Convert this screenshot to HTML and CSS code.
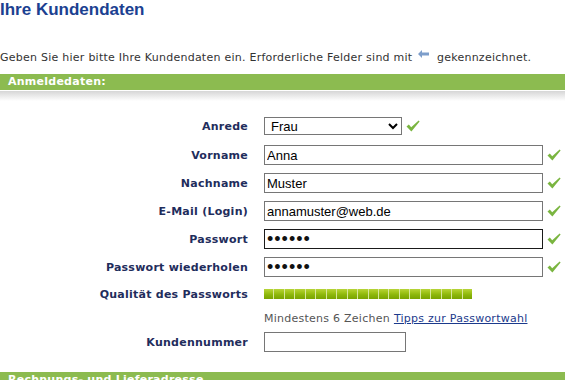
FILE: index.html
```html
<!DOCTYPE html>
<html lang="de">
<head>
<meta charset="utf-8">
<title>Ihre Kundendaten</title>
<link rel="stylesheet" href="styles.css">
</head>
<body>
<h1 class="title">Ihre Kundendaten</h1>
<p class="intro">Geben Sie hier bitte Ihre Kundendaten ein. Erforderliche Felder sind mit <svg class="req" width="11" height="8" viewBox="0 0 11 8"><polygon points="0,4 4,0 4,2.5 11,2.5 11,5.5 4,5.5 4,8" fill="#7d9ecb"/></svg> gekennzeichnet.</p>

<div class="section-bar">Anmeldedaten:</div>
<div class="bar-shadow"></div>

<form class="form">
  <div class="row row-first">
    <label class="label">Anrede</label>
    <div class="field">
      <select class="select"><option>Frau</option><option>Herr</option></select>
      <svg class="check" width="14" height="12" viewBox="0 0 14 12"><path d="M0.5 6.5 L2.8 4.6 L5.2 7.2 L12.6 0.4 L13.6 1.4 L5.4 11.6 Z" fill="#7ab540"/></svg>
    </div>
  </div>
  <div class="row">
    <label class="label">Vorname</label>
    <div class="field">
      <input class="input" type="text" value="Anna">
      <svg class="check" width="14" height="12" viewBox="0 0 14 12"><path d="M0.5 6.5 L2.8 4.6 L5.2 7.2 L12.6 0.4 L13.6 1.4 L5.4 11.6 Z" fill="#7ab540"/></svg>
    </div>
  </div>
  <div class="row">
    <label class="label">Nachname</label>
    <div class="field">
      <input class="input" type="text" value="Muster">
      <svg class="check" width="14" height="12" viewBox="0 0 14 12"><path d="M0.5 6.5 L2.8 4.6 L5.2 7.2 L12.6 0.4 L13.6 1.4 L5.4 11.6 Z" fill="#7ab540"/></svg>
    </div>
  </div>
  <div class="row">
    <label class="label">E-Mail (Login)</label>
    <div class="field">
      <input class="input" type="text" value="annamuster@web.de">
      <svg class="check" width="14" height="12" viewBox="0 0 14 12"><path d="M0.5 6.5 L2.8 4.6 L5.2 7.2 L12.6 0.4 L13.6 1.4 L5.4 11.6 Z" fill="#7ab540"/></svg>
    </div>
  </div>
  <div class="row">
    <label class="label">Passwort</label>
    <div class="field">
      <input class="input input-pw input-focus" type="password" value="geheim">
      <svg class="check" width="14" height="12" viewBox="0 0 14 12"><path d="M0.5 6.5 L2.8 4.6 L5.2 7.2 L12.6 0.4 L13.6 1.4 L5.4 11.6 Z" fill="#7ab540"/></svg>
    </div>
  </div>
  <div class="row">
    <label class="label">Passwort wiederholen</label>
    <div class="field">
      <input class="input input-pw" type="password" value="geheim">
      <svg class="check" width="14" height="12" viewBox="0 0 14 12"><path d="M0.5 6.5 L2.8 4.6 L5.2 7.2 L12.6 0.4 L13.6 1.4 L5.4 11.6 Z" fill="#7ab540"/></svg>
    </div>
  </div>
  <div class="row row-quality">
    <label class="label">Qualität des Passworts</label>
    <div class="field">
      <div class="strength">
        <span></span><span></span><span></span><span></span><span></span>
        <span></span><span></span><span></span><span></span><span></span>
        <span></span><span></span><span></span><span></span><span></span>
        <span></span><span></span><span></span><span></span><span></span>
      </div>
    </div>
  </div>
  <div class="row row-hint">
    <span class="label"></span>
    <div class="field hint">Mindestens 6 Zeichen <a class="link" href="#">Tipps zur Passwortwahl</a></div>
  </div>
  <div class="row row-last">
    <label class="label">Kundennummer</label>
    <div class="field">
      <input class="input input-short" type="text" value="">
    </div>
  </div>
</form>

<div class="section-bar">Rechnungs- und Lieferadresse</div>
</body>
</html>
```

FILE: styles.css
```css
html, body {
  margin: 0;
  padding: 0;
  background: #fff;
}

body {
  width: 565px;
  overflow: hidden;
  font-family: "DejaVu Sans", Verdana, sans-serif;
  font-size: 11px;
  letter-spacing: 0.25px;
  color: #333;
}

.title {
  margin: 0;
  font-family: "Liberation Sans", Arial, sans-serif;
  font-size: 17px;
  line-height: 20px;
  font-weight: bold;
  letter-spacing: 0;
  color: #1b4191;
}

.intro {
  margin: 30px 0 0;
  line-height: 16px;
  height: 16px;
  color: #333;
  white-space: nowrap;
}

.req {
  vertical-align: 3px;
  margin: 0 4px 0 2px;
}

.section-bar {
  margin-top: 8px;
  height: 16px;
  line-height: 16px;
  padding-left: 8px;
  background: #8cbb50;
  color: #fff;
  font-weight: bold;
  border-bottom: 1px solid #fff;
  white-space: nowrap;
}

.bar-shadow {
  height: 10px;
  background: linear-gradient(#d6d6d6, #fff);
}

.form {
  display: flex;
  flex-direction: column;
  padding-top: 15px;
}

.row {
  display: flex;
  align-items: center;
  column-gap: 16px;
  height: 20px;
  margin-bottom: 8px;
}

.row-first {
  margin-bottom: 9px;
}

.row-quality {
  margin-top: -1px;
  margin-bottom: 4px;
}

.row-hint {
  margin-bottom: 4px;
}

.row-last {
  margin-bottom: 12px;
}

.label {
  width: 248px;
  flex: none;
  text-align: right;
  font-weight: bold;
  color: #1f2d5c;
  white-space: nowrap;
}

.field {
  display: flex;
  align-items: center;
  column-gap: 4px;
}

.select {
  width: 138px;
  height: 18px;
  margin: 0;
  padding: 0 0 0 2px;
  border: 1px solid #767676;
  border-radius: 0;
  background: #fff;
  font-family: "Liberation Sans", Arial, sans-serif;
  font-size: 13px;
  letter-spacing: 0;
  color: #000;
}

.input {
  box-sizing: border-box;
  width: 279px;
  height: 20px;
  margin: 0;
  padding: 0 2px;
  border: 1px solid #767676;
  border-radius: 0;
  font-family: "Liberation Sans", Arial, sans-serif;
  font-size: 13px;
  letter-spacing: 0;
  color: #000;
  outline: none;
}

.input-pw {
  font-size: 18px;
  line-height: 18px;
  letter-spacing: 1px;
  color: #111;
}

.input-focus {
  border-color: #1a1a1a;
}

.input-short {
  width: 142px;
}

.check {
  flex: none;
}

.strength {
  display: flex;
  width: 208px;
  height: 10px;
}

.strength span {
  flex: 1;
  background: linear-gradient(#b7d43a 0%, #a2c61c 30%, #8ab50a 60%, #7aa400 100%);
  border-right: 1px solid #d7e79c;
}

.strength span:last-child {
  border-right: none;
}

.hint {
  color: #555;
  column-gap: 4px;
  white-space: nowrap;
}

.link {
  color: #1b3a8c;
  text-decoration: underline;
}
```
